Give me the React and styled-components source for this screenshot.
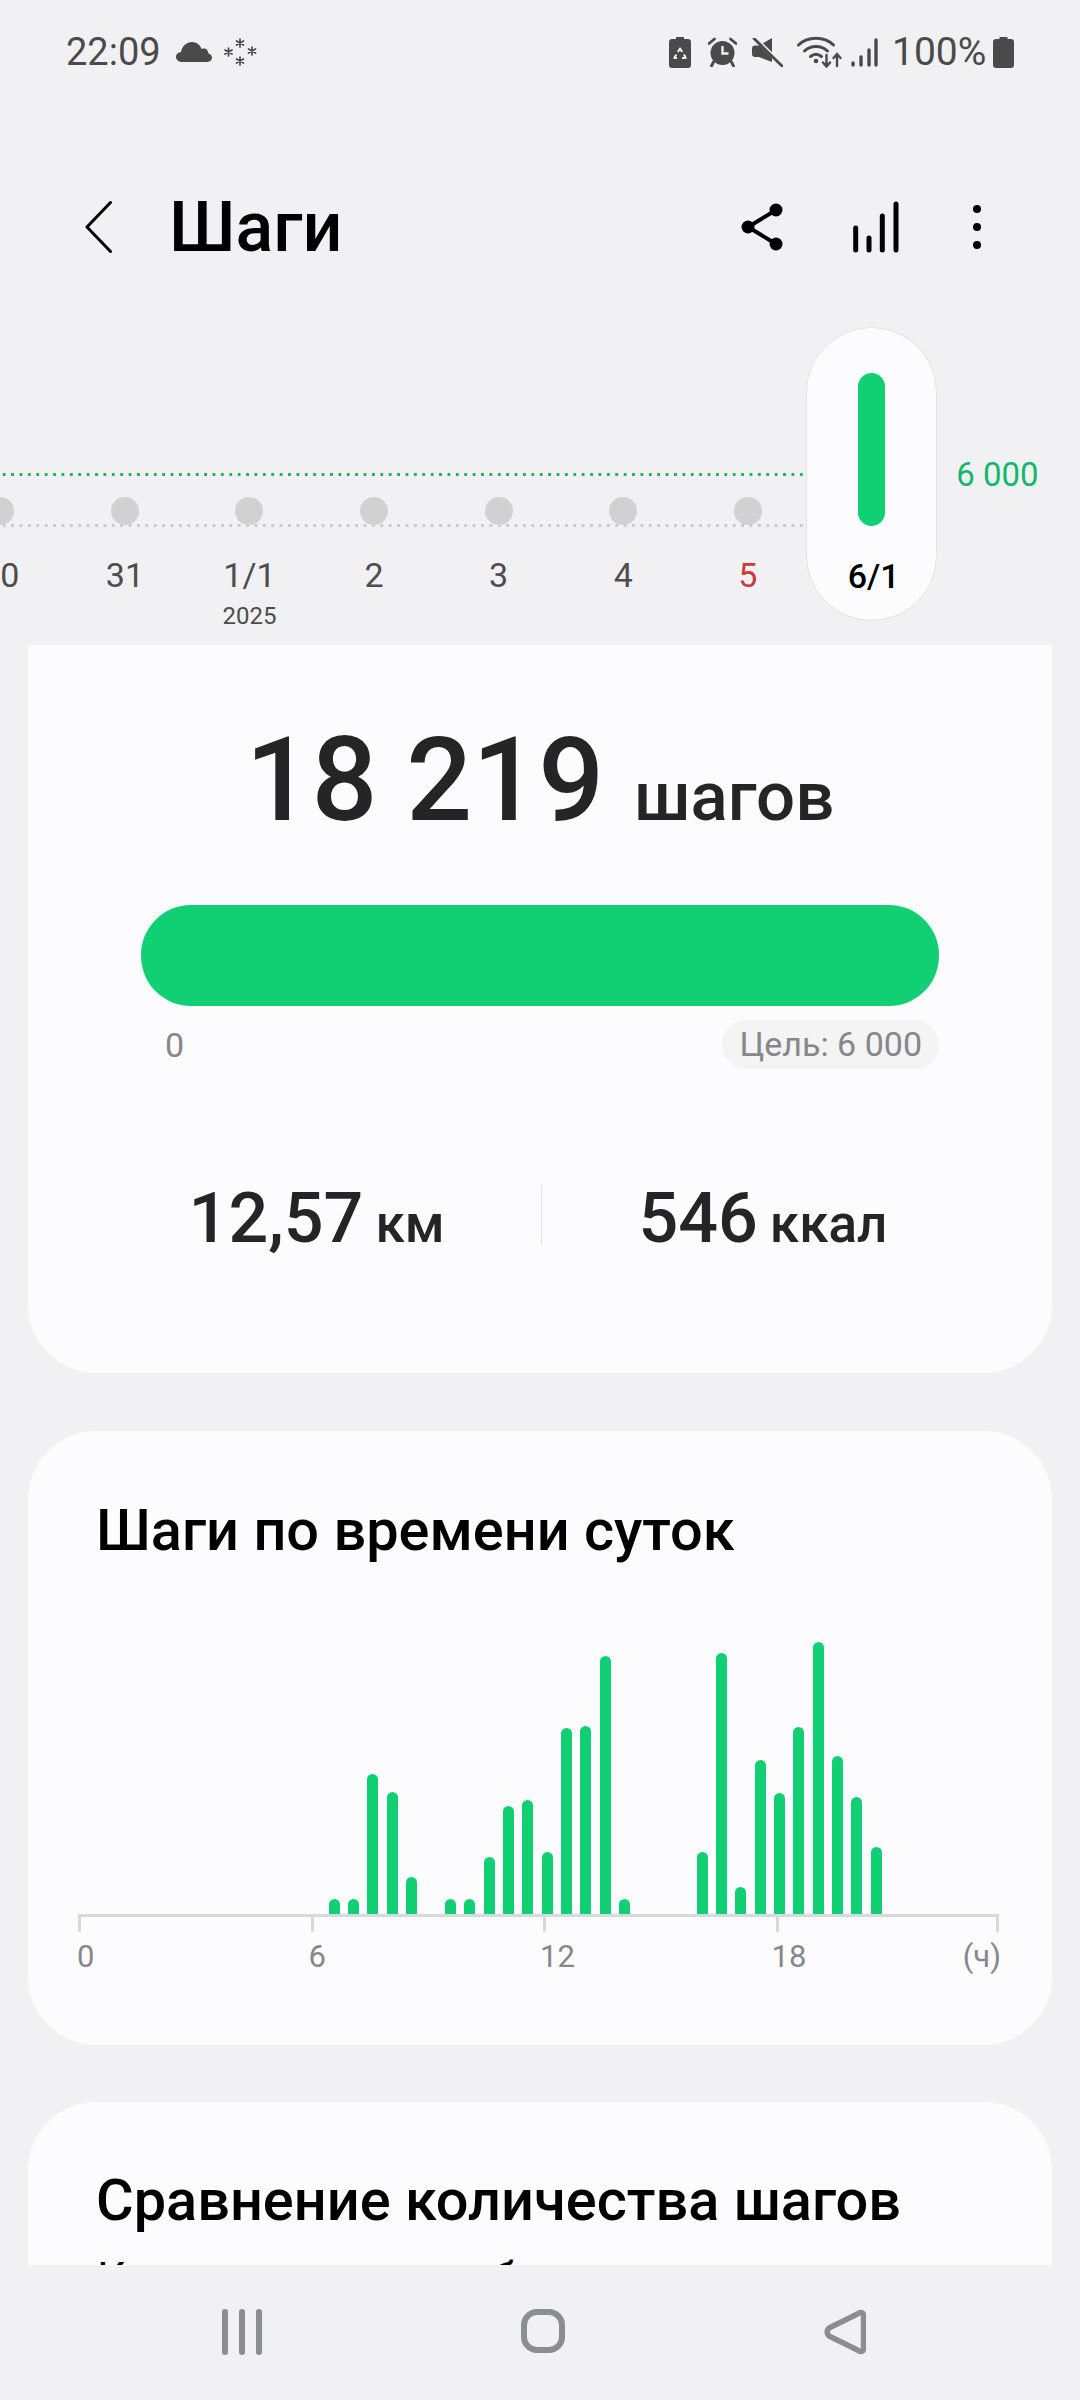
import React from "react";
import styled, { createGlobalStyle } from "styled-components";

const GREEN = "#11d073";
const days = [
  { label: "30" },
  { label: "31" },
  { label: "1/1", year: "2025" },
  { label: "2" },
  { label: "3" },
  { label: "4" },
  { label: "5", sunday: true },
];
// half-hour slots, value = bar height in px
const steps = {
  13: 15, 14: 15, 15: 140, 16: 122, 17: 37,
  19: 15, 20: 15, 21: 57, 22: 108, 23: 114, 24: 62, 25: 186, 26: 188, 27: 258, 28: 15,
  32: 62, 33: 261, 34: 27, 35: 154, 36: 121, 37: 187, 38: 272, 39: 158, 40: 117, 41: 67,
};
const slots = Array.from({ length: 48 }, (_, i) => steps[i] || 0);

const App = () => {
  return (
    <Page>
      <GlobalStyle />
      <StatusBar>
        <Time>22:09</Time>
        <StatusIcon $ml={15} width="36" height="20" viewBox="0 0 36 20">
          <path d="M6 20C2.500 20 0 17.800 0 15c0-2.700 2.200-4.700 5-4.900C6 4.300 10.500 0 16 0c4.600 0 8.400 2.900 9.500 7 1-.5 2-.6 3-.4 2.500.5 3.700 2.400 3.800 4.600 2.500.6 3.700 2.300 3.700 4.400 0 2.600-1.800 4.400-4.500 4.400Z" fill="#4a4a4a" />
        </StatusIcon>
        <StatusIcon $ml={12} width="33" height="28" viewBox="0 0 33 28">
          <g stroke="#4a4a4a" strokeWidth="1.700" strokeLinecap="round">
            <path d="M16 1v8M12.500 3l7 4M19.500 3l-7 4" />
            <path d="M16 19v8M12.500 21l7 4M19.500 21l-7 4" />
            <path d="M4.500 10v8M1 12l7 4M8 12l-7 4" />
            <path d="M28 9v8M24.500 11l7 4M31.500 11l-7 4" />
          </g>
        </StatusIcon>
        <StatusIcon $ml="auto" width="22" height="31" viewBox="0 0 22 31">
          <path d="M7 0h8v2h4c1.700 0 3 1.300 3 3v23c0 1.700-1.300 3-3 3H3c-1.700 0-3-1.300-3-3V5c0-1.700 1.300-3 3-3h4Z" fill="#4a4a4a" />
          <path d="M8.800 15l2.200-3.600 2.200 3.600M15 17.500l1.700 3.500h-3.700M8 21H5.300l2-3.500" fill="none" stroke="#f1f1f3" strokeWidth="2" strokeLinejoin="round" />
        </StatusIcon>
        <StatusIcon $ml={17} width="29" height="30" viewBox="0 0 29 30">
          <circle cx="14.500" cy="16" r="12" fill="#4a4a4a" />
          <path d="M14.500 9v7.500h6" fill="none" stroke="#f1f1f3" strokeWidth="2.400" />
          <path d="M1 6.500 6.500 2M28 6.500 22.500 2M5.500 25 3.500 29M23.500 25l2 4" stroke="#4a4a4a" strokeWidth="2.800" strokeLinecap="round" />
        </StatusIcon>
        <StatusIcon $ml={15} width="31" height="29" viewBox="0 0 31 29">
          <path d="M0 10.500c0-1.700 1.300-3 3-3h4L20 0v24L7 19H3c-1.700 0-3-1.300-3-3Z" fill="#4a4a4a" />
          <path d="M4 1 29 26" stroke="#f1f1f3" strokeWidth="4" />
          <path d="M2 0.500 30 28" stroke="#4a4a4a" strokeWidth="2.800" strokeLinecap="round" />
        </StatusIcon>
        <StatusIcon $ml={14} width="45" height="32" viewBox="0 0 45 32">
          <g fill="none" stroke="#4a4a4a" strokeWidth="3" strokeLinecap="round">
            <path d="M1.500 9C11 0 27 0 36.500 9" />
            <path d="M7.500 15c6.500-6 16.500-6 23 0" />
            <path d="M13.500 20.500c3.500-2.800 7.500-2.800 11 0" />
          </g>
          <g fill="none" stroke="#4a4a4a" strokeWidth="2.400" strokeLinecap="round">
            <path d="M29.500 19v11M26 26.500l3.500 4 3.500-4" />
            <path d="M40 30V18.500M36.500 22l3.500-4 3.500 4" />
          </g>
          <circle cx="19" cy="25" r="2.300" fill="#4a4a4a" />
        </StatusIcon>
        <StatusIcon $ml={9} width="27" height="29" viewBox="0 0 27 29">
          <g stroke="#4a4a4a" strokeWidth="3.400" strokeLinecap="round">
            <path d="M2 27v-2" />
            <path d="M10 27v-8" />
            <path d="M18 27v-15" />
            <path d="M25 27V2" />
          </g>
        </StatusIcon>
        <Percent>100%</Percent>
        <StatusIcon $ml={8} width="21" height="31" viewBox="0 0 21 31">
          <path d="M6.500 0h8v2H18c1.700 0 3 1.300 3 3v23c0 1.700-1.300 3-3 3H3c-1.700 0-3-1.300-3-3V5c0-1.700 1.300-3 3-3h3.500Z" fill="#4a4a4a" />
        </StatusIcon>
      </StatusBar>

      <Header>
        <svg width="27" height="52" viewBox="0 0 27 52">
          <path d="M25.500 1.500 2 26l23.500 24.500" fill="none" stroke="#000" strokeWidth="3" strokeLinecap="round" strokeLinejoin="round" />
        </svg>
        <Title>Шаги</Title>
        <Actions>
          <svg width="42" height="48" viewBox="0 0 42 48">
            <path d="M35 7 7 24l28 17" fill="none" stroke="#000" strokeWidth="4" />
            <circle cx="35" cy="7" r="6.500" fill="#000" />
            <circle cx="7" cy="24" r="6.500" fill="#000" />
            <circle cx="35" cy="41" r="6.500" fill="#000" />
          </svg>
          <svg width="48" height="52" viewBox="0 0 48 52">
            <g stroke="#000" strokeWidth="5" strokeLinecap="round">
              <path d="M3.700 49V27" />
              <path d="M17 49V37" />
              <path d="M30.300 49V15" />
              <path d="M44 49V3" />
            </g>
          </svg>
          <svg width="16" height="46" viewBox="0 0 16 46">
            <circle cx="8" cy="5" r="4" fill="#000" />
            <circle cx="8" cy="23" r="4" fill="#000" />
            <circle cx="8" cy="41" r="4" fill="#000" />
          </svg>
        </Actions>
      </Header>

      <Scroll>
        <DayStrip>
          <GoalLine />
          <BaseLine />
          {days.map((d) => (
            <Day key={d.label}>
              <DayDot />
              <DayLabel $sunday={d.sunday}>{d.label}</DayLabel>
              {d.year && <YearLabel>{d.year}</YearLabel>}
            </Day>
          ))}
          <SelectedDay>
            <SelectedBar />
            <DayLabel $selected>6/1</DayLabel>
          </SelectedDay>
          <GoalValue>6 000</GoalValue>
        </DayStrip>

        <SummaryCard>
          <StepsRow>
            <StepsValue>18 219</StepsValue>
            <StepsUnit>шагов</StepsUnit>
          </StepsRow>
          <Progress />
          <ProgressLegend>
            <Zero>0</Zero>
            <GoalPill>Цель: 6 000</GoalPill>
          </ProgressLegend>
          <Stats>
            <Stat $side="left">
              <StatValue>12,57</StatValue>
              <StatUnit>км</StatUnit>
            </Stat>
            <StatDivider />
            <Stat $side="right">
              <StatValue>546</StatValue>
              <StatUnit>ккал</StatUnit>
            </Stat>
          </Stats>
        </SummaryCard>

        <ChartCard>
          <CardTitle>Шаги по времени суток</CardTitle>
          <Bars>
            {slots.map((h, i) => (
              <Slot key={i}>{h > 0 && <Bar style={{ height: h }} />}</Slot>
            ))}
          </Bars>
          <Ticks>
            <Tick />
            <Tick />
            <Tick />
            <LastTick />
          </Ticks>
          <AxisLabels>
            <span>0</span>
            <span>6</span>
            <span>12</span>
            <LastLabel>18<span>(ч)</span></LastLabel>
          </AxisLabels>
        </ChartCard>

        <CompareCard>
          <CardTitle>Сравнение количества шагов</CardTitle>
          <CompareText>Количество шагов больше</CompareText>
        </CompareCard>
      </Scroll>

      <NavBar>
        <svg width="40" height="46" viewBox="0 0 40 46">
          <g stroke="#8c8e8e" strokeWidth="6" strokeLinecap="round">
            <path d="M3 3v40" />
            <path d="M20 3v40" />
            <path d="M37 3v40" />
          </g>
        </svg>
        <svg width="44" height="44" viewBox="0 0 44 44">
          <rect x="3" y="3" width="38" height="38" rx="13" fill="none" stroke="#8c8e8e" strokeWidth="6" />
        </svg>
        <svg width="42" height="46" viewBox="0 0 42 46">
          <path d="M36.500 3.500c2 0 3 1.300 3 3.300v32.400c0 2-1 3.300-3 3.300-1 0-1.800-.5-2.600-1.300L5 27c-2.500-2.500-2.500-5.500 0-8L33.900 4.800c.8-.8 1.600-1.300 2.600-1.300Z" fill="none" stroke="#8c8e8e" strokeWidth="5.500" strokeLinejoin="round" />
        </svg>
      </NavBar>
    </Page>
  );
};

const GlobalStyle = createGlobalStyle`
  html, body {
    margin: 0;
    padding: 0;
    background: #f1f1f3;
  }
`;
const Page = styled.div`
  width: 1080px;
  height: 2400px;
  display: flex;
  flex-direction: column;
  overflow: hidden;
  background: #f1f1f3;
  font-family: Roboto, "Noto Sans", sans-serif;
`;
const StatusBar = styled.div`
  height: 104px;
  flex: none;
  display: flex;
  align-items: center;
  padding: 0 66px 0 66px;
  color: #4a4a4a;
`;
const Time = styled.span`
  font-size: 38px;
  line-height: 44px;
`;
const Percent = styled.span`
  font-size: 39px;
  line-height: 44px;
  margin-left: 14px;
  width: 93px;
`;
const StatusIcon = styled.svg`
  flex: none;
  margin-left: ${(p) => (p.$ml === "auto" ? "auto" : `${p.$ml}px`)};
`;
const Header = styled.div`
  height: 146px;
  flex: none;
  padding: 50px 95px 0 85px;
  display: flex;
  align-items: center;
`;
const Title = styled.h1`
  margin: 0 0 0 57px;
  font-size: 70px;
  font-weight: 500;
  line-height: 80px;
  color: #000;
`;
const Actions = styled.div`
  margin-left: auto;
  display: flex;
  align-items: center;
  gap: 69px;
`;
const Scroll = styled.div`
  flex: 1;
  min-height: 0;
  overflow: hidden;
  padding-top: 27px;
`;
const DayStrip = styled.div`
  position: relative;
  height: 294px;
  margin-left: -62px;
  display: flex;
  align-items: flex-start;
  margin-bottom: 24px;
`;
const dotted = (color) => `
  position: absolute;
  left: 62px;
  width: 804px;
  height: 3px;
  background: radial-gradient(circle at center, ${color} 1.4px, transparent 1.7px) 0 0 / 8.4px 3px repeat-x;
`;
const GoalLine = styled.div`
  ${dotted("#12b968")}
  top: 146px;
`;
const BaseLine = styled.div`
  ${dotted("#c9c9cb")}
  top: 197px;
`;
const Day = styled.div`
  position: relative;
  width: 124.6px;
  flex: none;
  display: flex;
  flex-direction: column;
  align-items: center;
  padding-top: 170px;
  box-sizing: border-box;
`;
const DayDot = styled.div`
  width: 28px;
  height: 28px;
  flex: none;
  border-radius: 50%;
  background: #d1d1d2;
`;
const DayLabel = styled.div`
  margin-top: 28px;
  margin-left: ${(p) => (p.$selected ? "4px" : "0")};
  flex: none;
  font-size: 34px;
  line-height: 44px;
  font-weight: ${(p) => (p.$selected ? 500 : 400)};
  color: ${(p) => (p.$sunday ? "#c93b3b" : p.$selected ? "#000" : "#4d4d4f")};
`;
const YearLabel = styled.div`
  font-size: 24px;
  line-height: 30px;
  margin-top: 4px;
  color: #4d4d4f;
`;
const SelectedDay = styled.div`
  position: relative;
  z-index: 1;
  width: 131px;
  height: 294px;
  margin-left: -4px;
  flex: none;
  box-sizing: border-box;
  padding-top: 45px;
  display: flex;
  flex-direction: column;
  align-items: center;
  background: #fcfcfe;
  border: 1px solid #e2e2e4;
  border-radius: 66px;
`;
const SelectedBar = styled.div`
  width: 27px;
  height: 153px;
  flex: none;
  border-radius: 14px;
  background: ${GREEN};
`;
const GoalValue = styled.div`
  margin: 128px 0 0 19px;
  font-size: 33px;
  line-height: 40px;
  height: 40px;
  white-space: nowrap;
  color: #10b969;
`;
const Card = styled.div`
  margin: 0 28px;
  background: #fcfcfe;
  border-radius: 68px;
`;
const SummaryCard = styled(Card)`
  border-radius: 0 0 68px 68px;
  height: 728px;
  padding-top: 70px;
  box-sizing: border-box;
`;
const StepsRow = styled.div`
  display: flex;
  justify-content: center;
  align-items: baseline;
  gap: 30px;
  height: 130px;
  color: #252528;
  font-weight: 500;
`;
const StepsValue = styled.span`
  font-size: 116px;
  line-height: 130px;
`;
const StepsUnit = styled.span`
  font-size: 69px;
`;
const Progress = styled.div`
  margin: 60px 113px 0;
  height: 101px;
  border-radius: 50px;
  background: ${GREEN};
`;
const ProgressLegend = styled.div`
  margin: 14px 113px 0;
  height: 49px;
  display: flex;
  align-items: center;
  justify-content: space-between;
  font-size: 34px;
  color: #87878a;
`;
const Zero = styled.span`
  margin-left: 24px;
`;
const GoalPill = styled.span`
  height: 49px;
  line-height: 49px;
  padding: 0 17px;
  border-radius: 25px;
  background: #f4f4f5;
`;
const Stats = styled.div`
  margin-top: 116px;
  padding-left: 3px;
  height: 60px;
  display: flex;
  align-items: center;
  color: #252528;
  font-weight: 500;
`;
const Stat = styled.div`
  flex: 1;
  display: flex;
  justify-content: ${(p) => (p.$side === "left" ? "flex-end" : "flex-start")};
  padding: ${(p) => (p.$side === "left" ? "6px 96px 0 0" : "6px 0 0 97px")};
  align-items: baseline;
  gap: 12px;
`;
const StatValue = styled.span`
  font-size: 70px;
`;
const StatUnit = styled.span`
  font-size: 53px;
`;
const StatDivider = styled.div`
  width: 1px;
  height: 60px;
  background: #e3e3e5;
`;
const ChartCard = styled(Card)`
  margin-top: 58px;
  height: 614px;
  padding-top: 70px;
  box-sizing: border-box;
`;
const CardTitle = styled.h2`
  margin: 0 0 0 68px;
  font-size: 57.7px;
  font-weight: 500;
  line-height: 58px;
  color: #000;
`;
const Bars = styled.div`
  height: 355px;
  margin-left: 49px;
  display: flex;
  align-items: flex-end;
`;
const Slot = styled.div`
  width: 19.36px;
  flex: none;
`;
const Bar = styled.div`
  width: 11px;
  border-radius: 6px 6px 0 0;
  background: ${GREEN};
`;
const Ticks = styled.div`
  margin: 0 0 0 50px;
  width: 921px;
  display: grid;
  grid-template-columns: 232.500px 232.500px 232.500px 1fr;
  border-top: 3px solid #d9d9db;
  height: 15px;
`;
const Tick = styled.div`
  border-left: 3px solid #d9d9db;
`;
const LastTick = styled(Tick)`
  border-right: 3px solid #d9d9db;
`;
const AxisLabels = styled.div`
  margin: 6px 0 0 49px;
  width: 924px;
  display: grid;
  grid-template-columns: 231.500px 231.500px 231.500px 1fr;
  font-size: 31px;
  line-height: 38px;
  color: #87878a;
`;
const LastLabel = styled.span`
  display: flex;
  justify-content: space-between;
`;
const CompareCard = styled(Card)`
  margin-top: 57px;
  height: 400px;
  padding-top: 69px;
  box-sizing: border-box;
`;
const CompareText = styled.p`
  margin: 20px 0 0 69px;
  font-size: 44px;
  line-height: 60px;
  color: #000;
`;
const NavBar = styled.div`
  position: relative;
  z-index: 2;
  height: 135px;
  flex: none;
  box-sizing: border-box;
  padding: 44px 214px 0 222px;
  display: flex;
  align-items: flex-start;
  justify-content: space-between;
  background: #f1f1f3;
`;

export default App;
